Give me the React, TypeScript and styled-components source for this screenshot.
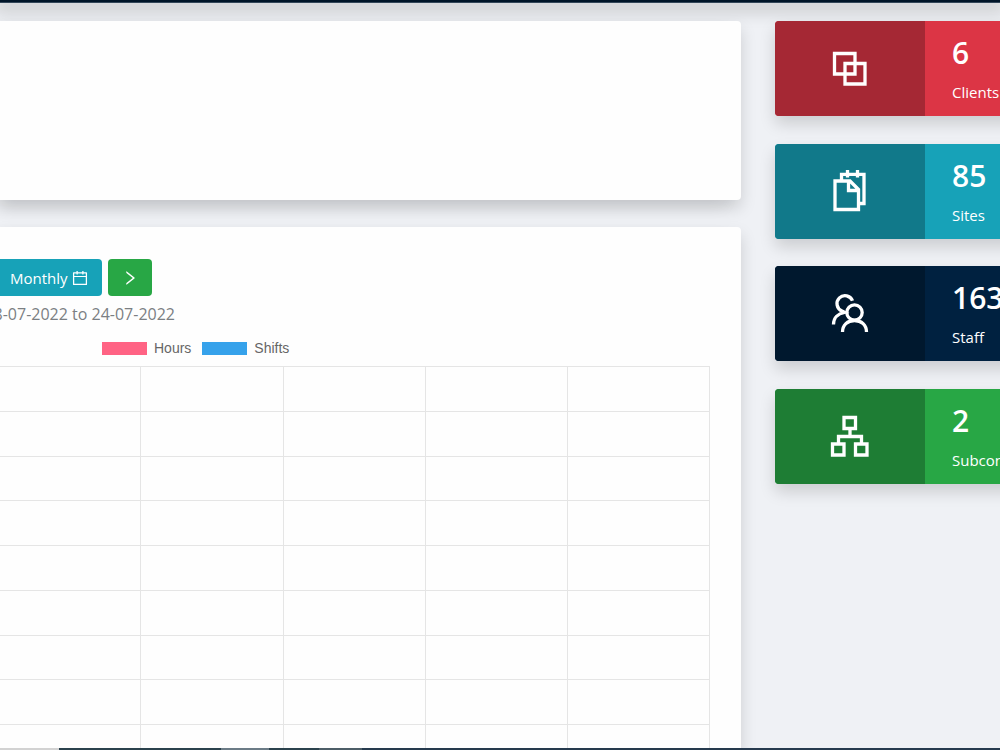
import React from "react";
import styled, { createGlobalStyle } from "styled-components";
import { AiOutlineCalendar, AiOutlineRight } from "react-icons/ai";

const GlobalStyle = createGlobalStyle`
  * { box-sizing: border-box; }
  body {
    margin: 0;
    background: #eff1f5;
    font-family: "Open Sans", "Noto Sans", sans-serif;
    overflow: hidden;
  }
`;

const shadow = "0 8px 16px rgba(0, 0, 0, 0.15)";

const Page = styled.div`
  height: 100vh;
  display: flex;
  flex-direction: column;
  overflow: hidden;
`;

const TopBar = styled.header`
  flex: none;
  height: 3px;
  background: #001529;
  border-bottom: 1px solid #33475a;
  box-shadow: 0 4px 16px 6px rgba(0, 0, 0, 0.15);
`;

const Content = styled.main`
  flex: 1;
  min-height: 0;
  display: grid;
  grid-template-columns: minmax(0, 1fr) 225px;
  grid-template-rows: minmax(0, 1fr);
  column-gap: 34px;
  padding-top: 18px;
`;

const Column = styled.div`
  display: flex;
  flex-direction: column;
  gap: 27px;
  min-height: 0;
`;

const Panel = styled.section`
  background: #fefefe;
  border-radius: 0 4px 4px 0;
  box-shadow: -16px 8px 16px rgba(0, 0, 0, 0.05), ${shadow};
`;

const BlankPanel = styled(Panel)`
  flex: none;
  height: 179px;
`;

const ChartPanel = styled(Panel)`
  flex: 1;
  min-height: 0;
  display: flex;
  flex-direction: column;
  padding: 32px 31px 0 0;
  border-bottom-right-radius: 0;
  overflow: hidden;
`;

const Toolbar = styled.div`
  flex: none;
  display: flex;
  gap: 6px;
`;

const Button = styled.button<{ $color: string; $flush?: boolean }>`
  display: flex;
  align-items: center;
  justify-content: center;
  gap: 3px;
  height: 37px;
  padding: ${(p) => (p.$flush ? "0 13px 0 10px" : "0 13px")};
  border: 0;
  border-radius: ${(p) => (p.$flush ? "0 4px 4px 0" : "4px")};
  background: ${(p) => p.$color};
  color: #fff;
  font: inherit;
  font-size: 15px;
  line-height: 24px;
  cursor: pointer;
`;

const RangeClip = styled.div`
  flex: none;
  display: flex;
  justify-content: flex-end;
  width: 175px;
  margin-top: 6px;
  overflow: hidden;
`;

const Range = styled.p`
  flex: none;
  margin: 0;
  color: #7b7f83;
  font-size: 16px;
  line-height: 24px;
  white-space: nowrap;
`;

const Legend = styled.ul`
  flex: none;
  display: flex;
  gap: 11px;
  margin: 12px 0 0;
  padding: 0 0 0 102px;
  list-style: none;
`;

const LegendItem = styled.li`
  display: flex;
  align-items: center;
  gap: 7px;
  color: #666;
  font-family: "Liberation Sans", Arial, sans-serif;
  font-size: 14px;
  line-height: 20px;
`;

const Swatch = styled.span<{ $color: string }>`
  width: 45px;
  height: 13px;
  background: ${(p) => p.$color};
`;

const Chart = styled.svg`
  flex: none;
  display: block;
  width: 100%;
  height: 400px;
  margin-top: 8px;
`;

const Stats = styled.aside`
  display: flex;
  flex-direction: column;
  justify-content: space-between;
  height: 463px;
`;

const StatCard = styled.article<{ $color: string }>`
  display: flex;
  height: 95px;
  width: 400px;
  border-radius: 4px;
  background: ${(p) => p.$color};
  box-shadow: ${shadow};
  color: #fff;
  overflow: hidden;
`;

const StatIcon = styled.div<{ $color: string }>`
  flex: none;
  width: 150px;
  display: flex;
  align-items: center;
  justify-content: center;
  background: ${(p) => p.$color};
`;

const StatBody = styled.div`
  display: flex;
  flex-direction: column;
  gap: 9px;
  padding: 13px 27px;
`;

const StatValue = styled.strong`
  font-size: 30px;
  font-weight: 600;
  line-height: 38px;
`;

const StatLabel = styled.span`
  font-size: 15px;
  line-height: 22px;
`;

const TaskStrip = styled.footer`
  position: relative;
  flex: none;
  display: flex;
  height: 2px;
`;

const Segment = styled.span<{ $color: string; $width?: number }>`
  flex: ${(p) => (p.$width ? `0 0 ${p.$width}px` : "1")};
  background: ${(p) => p.$color};
`;

const Glyph = styled.svg`
  display: block;
  width: 44px;
  height: 44px;
  fill: none;
  stroke: #fff;
  stroke-width: 3.3;
`;

const ClientsIcon = () => (
  <Glyph viewBox="0 0 44 44" aria-hidden="true">
    <path d="M6.500 6.500H27V27H6.500zM17 16.500h20V37H17z" />
  </Glyph>
);

const SitesIcon = () => (
  <Glyph viewBox="0 0 44 44" aria-hidden="true">
    <path d="M7 12h15l8.500 8.500V40.500H7zM20.500 12v9.500H30.500" />
    <path d="M13.500 11V5.300H36V34.500h-5.500M19.500 1v7.500M29.500 1v7.500" />
  </Glyph>
);

const StaffIcon = () => (
  <Glyph viewBox="0 0 44 44" aria-hidden="true">
    <circle cx="26.500" cy="20.500" r="7.700" />
    <path d="M14.500 40C14.500 33 19.500 28.500 26.500 28.500S38.500 33 38.500 40" />
    <path d="M24.500 8.800A8 8 0 1 0 14 19L16.500 20.300C10 21.500 5.500 26 5.500 32.500" />
  </Glyph>
);

const SubcontractorsIcon = () => (
  <Glyph viewBox="0 0 44 44" aria-hidden="true">
    <path d="M16 3.500h11.500v11H16zM4.500 30H16v11H4.500zM27.500 30H39v11H27.500zM22 14.500v8M10.500 30v-7.500h23V30" />
  </Glyph>
);

const stats = [
  { value: "6", label: "Clients", color: "#dc3545", dark: "#a52834", Icon: ClientsIcon },
  { value: "85", label: "Sites", color: "#17a2b8", dark: "#11798a", Icon: SitesIcon },
  { value: "163", label: "Staff", color: "#002140", dark: "#00182e", Icon: StaffIcon },
  { value: "2", label: "Subcontractors", color: "#28a745", dark: "#1e7d34", Icon: SubcontractorsIcon },
];

const columns = [19.8, 39.9, 59.9, 79.9];
const rows = [0, 45, 90, 134, 179, 224, 269, 313, 358];

export default function App() {
  return (
    <Page>
      <GlobalStyle />
      <TopBar />
      <Content>
        <Column>
          <BlankPanel />
          <ChartPanel>
            <Toolbar>
              <Button type="button" $color="#17a2b8" $flush>
                Monthly <AiOutlineCalendar size={18} />
              </Button>
              <Button type="button" $color="#28a745" aria-label="Next period">
                <AiOutlineRight size={18} />
              </Button>
            </Toolbar>
            <RangeClip>
              <Range>18-07-2022 to 24-07-2022</Range>
            </RangeClip>
            <Legend>
              <LegendItem>
                <Swatch $color="#ff6384" />
                Hours
              </LegendItem>
              <LegendItem>
                <Swatch $color="#36a2eb" />
                Shifts
              </LegendItem>
            </Legend>
            <Chart stroke="#e5e5e5" shapeRendering="crispEdges" aria-label="Hours and shifts">
              {rows.map((y) => (
                <line key={y} x1="0" x2="100%" y1={y + 0.5} y2={y + 0.5} />
              ))}
              {columns.map((x) => (
                <line key={x} x1={`${x}%`} x2={`${x}%`} y1="0" y2="100%" />
              ))}
              <line x1="99.930%" x2="99.930%" y1="0" y2="100%" />
            </Chart>
          </ChartPanel>
        </Column>
        <Stats>
          {stats.map(({ value, label, color, dark, Icon }) => (
            <StatCard key={label} $color={color}>
              <StatIcon $color={dark}>
                <Icon />
              </StatIcon>
              <StatBody>
                <StatValue>{value}</StatValue>
                <StatLabel>{label}</StatLabel>
              </StatBody>
            </StatCard>
          ))}
        </Stats>
      </Content>
      <TaskStrip>
        <Segment $color="#d2d2d2" $width={59} />
        <Segment $color="#2b424d" $width={162} />
        <Segment $color="#6b7b86" $width={48} />
        <Segment $color="#2b424d" $width={50} />
        <Segment $color="#4c5d67" $width={43} />
        <Segment $color="#263a4e" />
      </TaskStrip>
    </Page>
  );
}
